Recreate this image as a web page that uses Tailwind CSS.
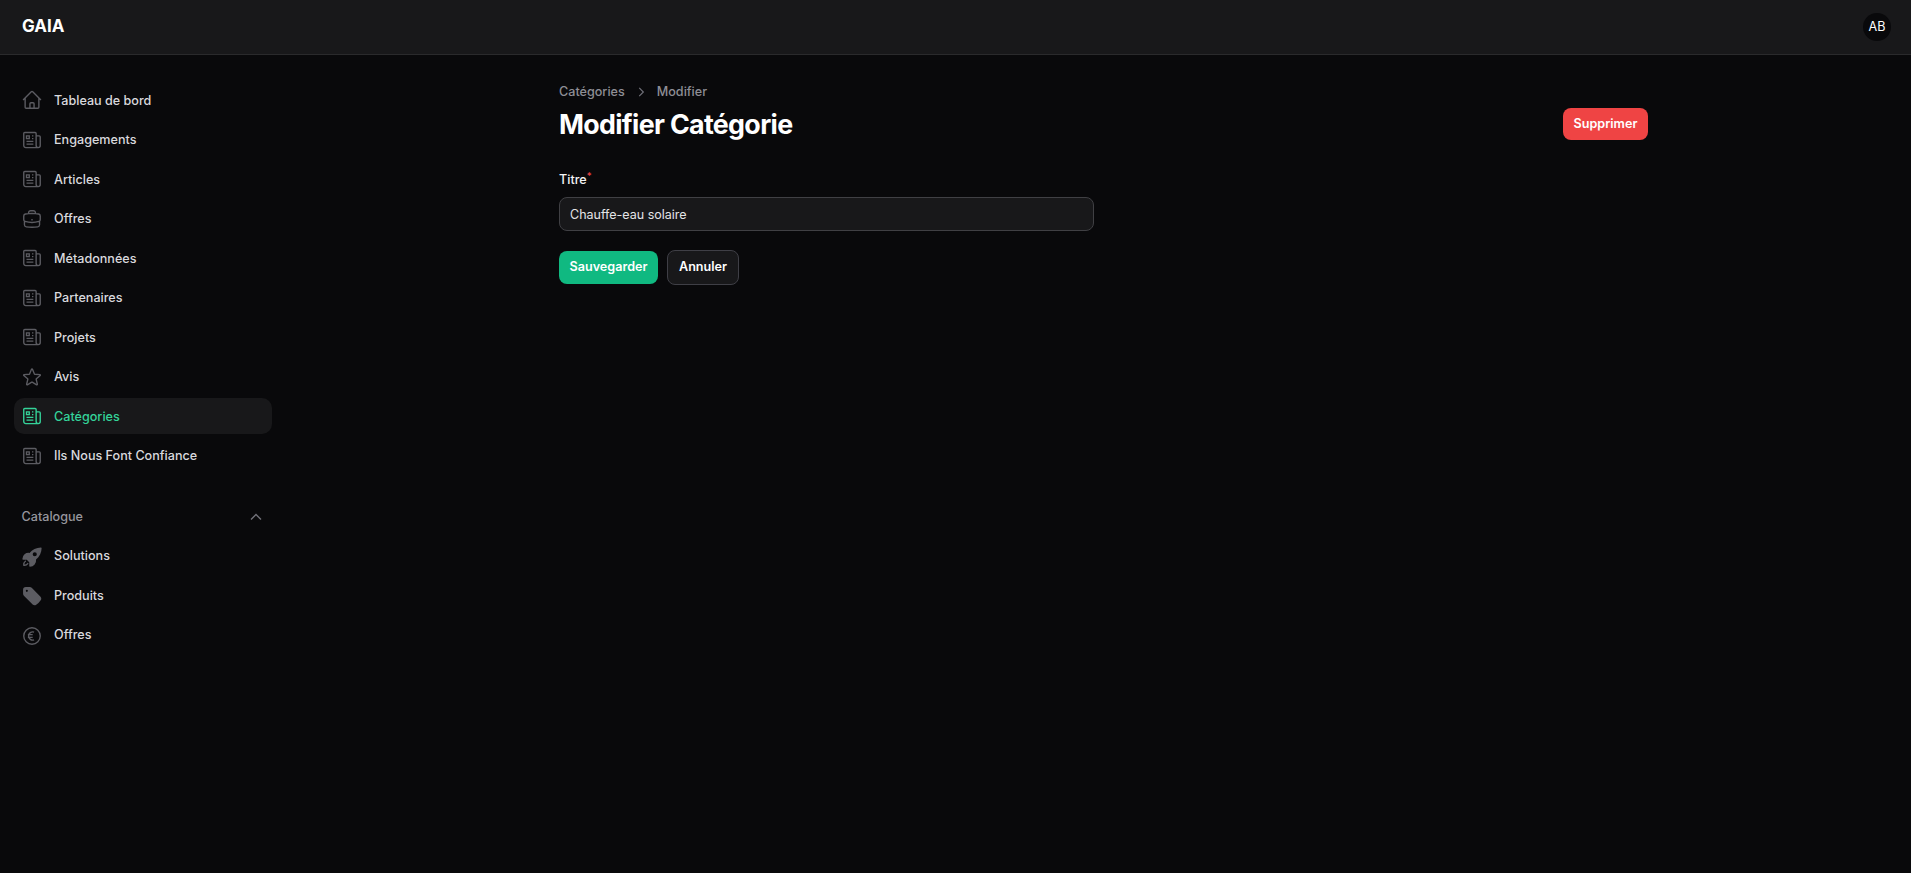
<!DOCTYPE html>
<html lang="en">
<head>
  <meta charset="UTF-8" />
  <title>Modifier Catégorie</title>
  <script src="https://cdn.jsdelivr.net/npm/@tailwindcss/browser@4"></script>
</head>
<body class="bg-[#09090b] text-white font-['Inter',sans-serif] h-[873px] overflow-hidden">
  <!-- Top bar -->
  <header class="h-[55px] bg-[#18181a] border-b border-[#2a2a2c] flex items-center justify-between pl-[22px] pr-[20px]">
    <span class="text-[17px] font-bold">GAIA</span>
    <div class="w-7 h-7 rounded-full bg-[#09090b] flex items-center justify-center text-[12.6px]">AB</div>
  </header>

  <div class="flex">
    <!-- Sidebar -->
    <aside class="w-[258px] ml-[14px] pt-[27px] text-[12.6px] font-medium text-[#d9d9de] shrink-0">
      <nav class="flex flex-col gap-[3.5px]">
        <a class="h-9 px-[7px] flex items-center gap-[11px] rounded-[10px]"><svg class="w-[22px] h-[22px] text-[#5c5c62]" fill="none" viewBox="0 0 24 24" stroke="currentColor" stroke-width="1.5"><path d="m2.25 12 8.954-8.955c.44-.439 1.152-.439 1.591 0L21.75 12M4.5 9.750v10.125c0 .621.504 1.125 1.125 1.125H9.750v-4.875c0-.621.504-1.125 1.125-1.125h2.250c.621 0 1.125.504 1.125 1.125V21h4.125c.621 0 1.125-.504 1.125-1.125V9.750M8.250 21h8.250"/></svg><span class="mt-[2px]">Tableau de bord</span></a>
        <a class="h-9 px-[7px] flex items-center gap-[11px] rounded-[10px]"><svg class="w-[22px] h-[22px] text-[#5c5c62]" fill="none" viewBox="0 0 24 24" stroke="currentColor" stroke-width="1.5"><path d="M12 7.500h1.500m-1.500 3h1.500m-7.500 3h7.500m-7.500 3h7.500m3-9h3.375c.621 0 1.125.504 1.125 1.125V18a2.250 2.250 0 0 1-2.250 2.250M16.500 7.500V18a2.250 2.250 0 0 0 2.250 2.250M16.500 7.500V4.875c0-.621-.504-1.125-1.125-1.125H4.125C3.504 3.750 3 4.254 3 4.875V18a2.250 2.250 0 0 0 2.250 2.250h13.500M6 7.500h3v3H6v-3Z"/></svg><span class="mt-[2px]">Engagements</span></a>
        <a class="h-9 px-[7px] flex items-center gap-[11px] rounded-[10px]"><svg class="w-[22px] h-[22px] text-[#5c5c62]" fill="none" viewBox="0 0 24 24" stroke="currentColor" stroke-width="1.5"><path d="M12 7.500h1.500m-1.500 3h1.500m-7.500 3h7.500m-7.500 3h7.500m3-9h3.375c.621 0 1.125.504 1.125 1.125V18a2.250 2.250 0 0 1-2.250 2.250M16.500 7.500V18a2.250 2.250 0 0 0 2.250 2.250M16.500 7.500V4.875c0-.621-.504-1.125-1.125-1.125H4.125C3.504 3.750 3 4.254 3 4.875V18a2.250 2.250 0 0 0 2.250 2.250h13.500M6 7.500h3v3H6v-3Z"/></svg><span class="mt-[2px]">Articles</span></a>
        <a class="h-9 px-[7px] flex items-center gap-[11px] rounded-[10px]"><svg class="w-[22px] h-[22px] text-[#5c5c62]" fill="none" viewBox="0 0 24 24" stroke="currentColor" stroke-width="1.5"><path d="M20.250 14.150v4.250c0 1.094-.787 2.036-1.872 2.180-2.087.277-4.216.420-6.378.420s-4.291-.143-6.378-.420c-1.085-.144-1.872-1.086-1.872-2.180v-4.250m16.500 0a2.180 2.180 0 0 0 .750-1.661V8.706c0-1.081-.768-2.015-1.837-2.175a48.114 48.114 0 0 0-3.413-.387m4.500 8.006c-.194.165-.420.295-.673.380A23.978 23.978 0 0 1 12 15.750c-2.648 0-5.195-.429-7.577-1.220a2.016 2.016 0 0 1-.673-.380m0 0A2.180 2.180 0 0 1 3 12.489V8.706c0-1.081.768-2.015 1.837-2.175a48.111 48.111 0 0 1 3.413-.387m7.500 0V5.250A2.250 2.250 0 0 0 13.500 3h-3a2.250 2.250 0 0 0-2.250 2.250v.894m7.500 0a48.667 48.667 0 0 0-7.500 0M12 12.750h.008v.008H12v-.008Z"/></svg><span class="mt-[2px]">Offres</span></a>
        <a class="h-9 px-[7px] flex items-center gap-[11px] rounded-[10px]"><svg class="w-[22px] h-[22px] text-[#5c5c62]" fill="none" viewBox="0 0 24 24" stroke="currentColor" stroke-width="1.5"><path d="M12 7.500h1.500m-1.500 3h1.500m-7.500 3h7.500m-7.500 3h7.500m3-9h3.375c.621 0 1.125.504 1.125 1.125V18a2.250 2.250 0 0 1-2.250 2.250M16.500 7.500V18a2.250 2.250 0 0 0 2.250 2.250M16.500 7.500V4.875c0-.621-.504-1.125-1.125-1.125H4.125C3.504 3.750 3 4.254 3 4.875V18a2.250 2.250 0 0 0 2.250 2.250h13.500M6 7.500h3v3H6v-3Z"/></svg><span class="mt-[2px]">Métadonnées</span></a>
        <a class="h-9 px-[7px] flex items-center gap-[11px] rounded-[10px]"><svg class="w-[22px] h-[22px] text-[#5c5c62]" fill="none" viewBox="0 0 24 24" stroke="currentColor" stroke-width="1.5"><path d="M12 7.500h1.500m-1.500 3h1.500m-7.500 3h7.500m-7.500 3h7.500m3-9h3.375c.621 0 1.125.504 1.125 1.125V18a2.250 2.250 0 0 1-2.250 2.250M16.500 7.500V18a2.250 2.250 0 0 0 2.250 2.250M16.500 7.500V4.875c0-.621-.504-1.125-1.125-1.125H4.125C3.504 3.750 3 4.254 3 4.875V18a2.250 2.250 0 0 0 2.250 2.250h13.500M6 7.500h3v3H6v-3Z"/></svg><span class="mt-[2px]">Partenaires</span></a>
        <a class="h-9 px-[7px] flex items-center gap-[11px] rounded-[10px]"><svg class="w-[22px] h-[22px] text-[#5c5c62]" fill="none" viewBox="0 0 24 24" stroke="currentColor" stroke-width="1.5"><path d="M12 7.500h1.500m-1.500 3h1.500m-7.500 3h7.500m-7.500 3h7.500m3-9h3.375c.621 0 1.125.504 1.125 1.125V18a2.250 2.250 0 0 1-2.250 2.250M16.500 7.500V18a2.250 2.250 0 0 0 2.250 2.250M16.500 7.500V4.875c0-.621-.504-1.125-1.125-1.125H4.125C3.504 3.750 3 4.254 3 4.875V18a2.250 2.250 0 0 0 2.250 2.250h13.500M6 7.500h3v3H6v-3Z"/></svg><span class="mt-[2px]">Projets</span></a>
        <a class="h-9 px-[7px] flex items-center gap-[11px] rounded-[10px]"><svg class="w-[22px] h-[22px] text-[#5c5c62]" fill="none" viewBox="0 0 24 24" stroke="currentColor" stroke-width="1.5"><path d="M11.480 3.499a.562.562 0 0 1 1.040 0l2.125 5.111a.563.563 0 0 0 .475.345l5.518.442c.499.040.701.663.321.988l-4.204 3.602a.563.563 0 0 0-.182.557l1.285 5.385a.562.562 0 0 1-.840.610l-4.725-2.885a.562.562 0 0 0-.586 0L6.982 20.540a.562.562 0 0 1-.840-.610l1.285-5.386a.562.562 0 0 0-.182-.557l-4.204-3.602a.562.562 0 0 1 .321-.988l5.518-.442a.563.563 0 0 0 .475-.345L11.480 3.500Z"/></svg><span class="mt-[2px]">Avis</span></a>
        <a class="h-9 px-[7px] flex items-center gap-[11px] rounded-[10px] bg-[#18181a] text-[#34d399]"><svg class="w-[22px] h-[22px]" fill="none" viewBox="0 0 24 24" stroke="currentColor" stroke-width="1.5"><path d="M12 7.500h1.500m-1.500 3h1.500m-7.500 3h7.500m-7.500 3h7.500m3-9h3.375c.621 0 1.125.504 1.125 1.125V18a2.250 2.250 0 0 1-2.250 2.250M16.500 7.500V18a2.250 2.250 0 0 0 2.250 2.250M16.500 7.500V4.875c0-.621-.504-1.125-1.125-1.125H4.125C3.504 3.750 3 4.254 3 4.875V18a2.250 2.250 0 0 0 2.250 2.250h13.500M6 7.500h3v3H6v-3Z"/></svg><span class="mt-[2px]">Catégories</span></a>
        <a class="h-9 px-[7px] flex items-center gap-[11px] rounded-[10px]"><svg class="w-[22px] h-[22px] text-[#5c5c62]" fill="none" viewBox="0 0 24 24" stroke="currentColor" stroke-width="1.5"><path d="M12 7.500h1.500m-1.500 3h1.500m-7.500 3h7.500m-7.500 3h7.500m3-9h3.375c.621 0 1.125.504 1.125 1.125V18a2.250 2.250 0 0 1-2.250 2.250M16.500 7.500V18a2.250 2.250 0 0 0 2.250 2.250M16.500 7.500V4.875c0-.621-.504-1.125-1.125-1.125H4.125C3.504 3.750 3 4.254 3 4.875V18a2.250 2.250 0 0 0 2.250 2.250h13.500M6 7.500h3v3H6v-3Z"/></svg><span class="mt-[2px]">Ils Nous Font Confiance</span></a>
      </nav>

      <div class="mt-[26px] h-9 pl-[7.5px] pr-2 flex items-center justify-between text-[#96969d]">
        <span>Catalogue</span>
        <svg class="w-4 h-4 -mt-[2px] text-[#71717a]" fill="none" viewBox="0 0 24 24" stroke="currentColor" stroke-width="2"><path d="m4.500 15.750 7.500-7.500 7.500 7.500"/></svg>
      </div>
      <nav class="flex flex-col gap-[3.5px] mt-[3px]">
        <a class="h-9 px-[7px] flex items-center gap-[11px]"><svg class="w-[22px] h-[22px] text-[#5c5c62]" viewBox="0 0 24 24" fill="currentColor"><path fill-rule="evenodd" d="M9.315 7.584C12.195 3.883 16.695 1.500 21.750 1.500a.750.750 0 0 1 .750.750c0 5.056-2.383 9.555-6.084 12.436A6.750 6.750 0 0 1 9.750 22.500a.750.750 0 0 1-.750-.750v-4.131A15.838 15.838 0 0 1 6.382 15H2.250a.750.750 0 0 1-.750-.750 6.750 6.750 0 0 1 7.815-6.666ZM15 6.750a2.250 2.250 0 1 0 0 4.500 2.250 2.250 0 0 0 0-4.500Z"/><path d="M5.260 17.242a.750.750 0 1 0-.897-1.203 5.243 5.243 0 0 0-2.050 5.022.750.750 0 0 0 .625.627 5.243 5.243 0 0 0 5.022-2.051.750.750 0 1 0-1.202-.897 3.744 3.744 0 0 1-3.008 1.510c0-1.230.592-2.323 1.510-3.008Z"/></svg>Solutions</a>
        <a class="h-9 px-[7px] flex items-center gap-[11px]"><svg class="w-[22px] h-[22px] text-[#5c5c62]" viewBox="0 0 24 24" fill="currentColor"><path fill-rule="evenodd" d="M5.250 2.250a3 3 0 0 0-3 3v4.318a3 3 0 0 0 .879 2.121l9.580 9.581c.920.920 2.390 1.186 3.548.428a18.849 18.849 0 0 0 5.441-5.440c.758-1.160.492-2.629-.428-3.548l-9.580-9.581a3 3 0 0 0-2.122-.879H5.250ZM6.375 7.500a1.125 1.125 0 1 0 0-2.250 1.125 1.125 0 0 0 0 2.250Z"/></svg>Produits</a>
        <a class="h-9 px-[7px] flex items-center gap-[11px]"><svg class="w-[22px] h-[22px] text-[#5c5c62]" fill="none" viewBox="0 0 24 24" stroke="currentColor" stroke-width="1.5"><path d="M14.250 7.756a4.500 4.500 0 1 0 0 8.488M7.500 10.500h5.250m-5.250 3h5.250M21 12a9 9 0 1 1-18 0 9 9 0 0 1 18 0Z"/></svg>Offres</a>
      </nav>
    </aside>

    <!-- Main -->
    <main class="ml-[287px] w-[1089px] pt-[28px]">
      <div class="flex items-center gap-[9px] text-[12.6px] font-medium text-[#8e8e95]">
        <span>Catégories</span>
        <svg class="w-3.5 h-3.5 text-[#71717a]" fill="none" viewBox="0 0 24 24" stroke="currentColor" stroke-width="2"><path d="M9 5l7 7-7 7"/></svg>
        <span>Modifier</span>
      </div>
      <div class="flex items-center justify-between mt-[4px]">
        <h1 class="text-[26.8px] leading-9 font-bold tracking-tight">Modifier Catégorie</h1>
        <button class="h-8 w-[85px] pt-[2px] rounded-lg bg-[#ef4444] text-[12.6px] font-semibold">Supprimer</button>
      </div>

      <form class="mt-[28px] w-[535px]">
        <label class="block text-[12.6px] font-medium leading-5 text-[#f4f4f5]">Titre<sup class="text-[#ef4444] font-medium">*</sup></label>
        <div class="mt-[7px] h-[34px] pt-[2px] rounded-lg bg-[#18181a] border border-[#404044] flex items-center px-[10px] text-[12.5px] text-[#e4e4e7]">Chauffe-eau solaire</div>
        <div class="flex items-center gap-[9px] mt-[19px]">
          <button type="button" class="h-[33px] w-[99px] rounded-lg bg-[#10b981] text-[12.6px] font-semibold">Sauvegarder</button>
          <button type="button" class="h-[35px] w-[72px] rounded-lg bg-[#18181a] border border-[#3f3f46] text-[12.6px] font-semibold">Annuler</button>
        </div>
      </form>
    </main>
  </div>
</body>
</html>
